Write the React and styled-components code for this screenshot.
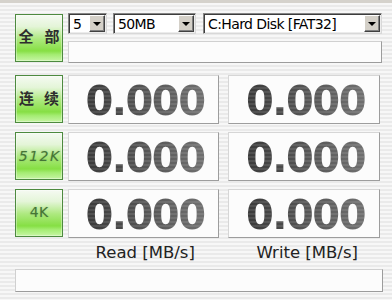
import React from 'react';
import styled, { createGlobalStyle } from 'styled-components';

const GlobalStyle = createGlobalStyle`
  html, body { margin: 0; padding: 0; }
  body {
    width: 392px;
    height: 300px;
    overflow: hidden;
    font-family: "DejaVu Sans", sans-serif;
  }
`;

const Window = styled.div`
  width: 392px;
  height: 300px;
  box-sizing: border-box;
  border-top: 3px solid #d5d2cc;
  background: repeating-linear-gradient(to bottom, #f7f7f7 0 2px, #eaeaea 2px 4px);
  padding: 10px 9px 0 15px;
  display: flex;
  flex-direction: column;
`;

const Header = styled.div`
  display: flex;
  gap: 5px;
`;

const Controls = styled.div`
  display: flex;
  flex-direction: column;
  gap: 7px;
  width: 314px;
`;

const ComboRow = styled.div`
  display: flex;
  gap: 6px;
  & > :last-child { margin-left: 1px; }
`;

const Combo = styled.div`
  width: ${p => p.$w}px;
  height: 21px;
  box-sizing: border-box;
  background: #fff;
  border: 1px solid;
  border-color: #858585 #d8d8d8 #d8d8d8 #858585;
  box-shadow: inset 1px 1px 0 #3c3c3c, inset -1px -1px 0 #ececec;
  display: flex;
  align-items: center;
  justify-content: space-between;
  padding: 1px;
`;

const ComboText = styled.span`
  padding-left: 3px;
  font-size: 14px;
  letter-spacing: -0.6px;
  color: #000;
  white-space: nowrap;
`;

const ArrowButton = styled.span`
  width: 16px;
  height: 17px;
  box-sizing: border-box;
  background: #d4d0c8;
  border: 1px solid;
  border-color: #fff #404040 #404040 #fff;
  box-shadow: inset -1px -1px 0 #808080;
  display: flex;
  align-items: center;
  justify-content: center;
  &::after {
    content: "";
    border-left: 4px solid transparent;
    border-right: 4px solid transparent;
    border-top: 4px solid #000;
  }
`;

const TextField = styled.div`
  height: ${p => p.$h || 22}px;
  box-sizing: border-box;
  background: #fcfcfc;
  border: 1px solid;
  border-color: #d0d0d0 #9c9c9c #9c9c9c #d0d0d0;
`;

const TestButton = styled.div`
  width: 48px;
  height: 48px;
  box-sizing: border-box;
  margin-top: ${p => p.$top || 0}px;
  border: 1px solid #4d8a3f;
  background: linear-gradient(
    to bottom,
    #f5faf2 0%,
    #e4f5d8 25%,
    #ade97f 52%,
    #86df44 78%,
    #a4ec72 86%,
    #c6f5a4 100%
  );
  box-shadow: inset 0 0 0 1px rgba(255, 255, 255, 0.35);
  display: flex;
  align-items: center;
  justify-content: center;
  color: ${p => (p.$soft ? '#457536' : '#2e2e2e')};
  font-family: ${p => (p.$soft ? '"DejaVu Sans", sans-serif' : '"Noto Sans CJK SC", sans-serif')};
  font-weight: ${p => (p.$soft ? 'normal' : 'bold')};
  font-style: ${p => (p.$italic ? 'italic' : 'normal')};
  font-size: ${p => p.$size || 15}px;
  letter-spacing: ${p => p.$spacing || 0}px;
  padding-left: ${p => p.$spacing || 0}px;
  padding-bottom: ${p => p.$lift || 0}px;
  text-shadow: ${p => (p.$soft ? '0 0 1.5px rgba(80, 130, 60, 0.45)' : 'none')};
  white-space: nowrap;
`;

const Results = styled.div`
  display: flex;
  flex-direction: column;
  gap: 8px;
  margin-top: 12px;
`;

const Row = styled.div`
  display: flex;
  gap: 5px;
`;

const Pair = styled.div`
  display: flex;
  gap: 9px;
`;

const ValueBox = styled.div`
  width: ${p => p.$w}px;
  height: 49px;
  box-sizing: border-box;
  background: #fcfcfc;
  border: 1px solid;
  border-color: #d6d6d6 #9d9d9d #9d9d9d #d6d6d6;
  display: flex;
  align-items: center;
  justify-content: center;
  padding-top: 3px;
  padding-left: 3px;
`;

const Value = styled.span`
  font: bold 40px/1 "DejaVu Sans", sans-serif;
  letter-spacing: -1.5px;
  background:
    repeating-linear-gradient(to bottom, rgba(255, 255, 255, 0) 0 2px, rgba(255, 255, 255, 0.1) 2px 4px),
    linear-gradient(to right, #3a3a3a, #707070);
  -webkit-background-clip: text;
  background-clip: text;
  color: transparent;
`;

const Labels = styled.div`
  display: flex;
  gap: 9px;
  padding-left: 53px;
  margin-top: 5px;
`;

const Label = styled.div`
  width: ${p => p.$w}px;
  text-align: center;
  font-size: 16.5px;
  line-height: 20px;
  color: #222;
  padding-left: 2px;
`;

const StatusBar = styled(TextField)`
  width: 368px;
  margin-top: 6px;
`;

const rows = [
  { key: 'seq', text: '连续', size: 15, spacing: 10, lift: 3 },
  { key: '512', text: '512K', size: 14, spacing: 1.5, soft: true, italic: true },
  { key: '4k', text: '4K', size: 14, spacing: 0.5, soft: true, lift: 2 },
];

export default function App() {
  return (
    <>
      <GlobalStyle />
      <Window>
        <Header>
          <TestButton $top={1} $size={15} $spacing={11} $lift={6}>全部</TestButton>
          <Controls>
            <ComboRow>
              <Combo $w={39}>
                <ComboText>5</ComboText>
                <ArrowButton />
              </Combo>
              <Combo $w={83}>
                <ComboText>50MB</ComboText>
                <ArrowButton />
              </Combo>
              <Combo $w={179}>
                <ComboText>C:Hard Disk [FAT32]</ComboText>
                <ArrowButton />
              </Combo>
            </ComboRow>
            <TextField $h={22} />
          </Controls>
        </Header>
        <Results>
          {rows.map(r => (
            <Row key={r.key}>
              <TestButton
                $size={r.size}
                $spacing={r.spacing}
                $soft={r.soft}
                $italic={r.italic}
                $lift={r.lift}
              >
                {r.text}
              </TestButton>
              <Pair>
                <ValueBox $w={151}><Value>0.000</Value></ValueBox>
                <ValueBox $w={152}><Value>0.000</Value></ValueBox>
              </Pair>
            </Row>
          ))}
        </Results>
        <Labels>
          <Label $w={151}>Read [MB/s]</Label>
          <Label $w={152}>Write [MB/s]</Label>
        </Labels>
        <StatusBar $h={23} />
      </Window>
    </>
  );
}
